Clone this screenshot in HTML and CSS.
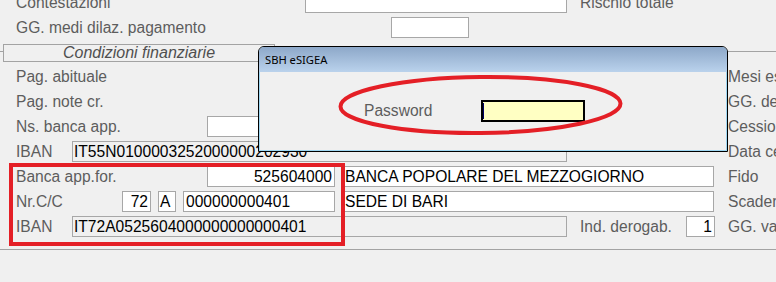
FILE: index.html
```html
<!DOCTYPE html>
<html lang="it">
<head>
<meta charset="utf-8">
<title>SBH eSIGEA</title>
<link rel="stylesheet" href="styles.css">
</head>
<body>
<div class="screen">
  <div class="form">
    <div class="row row-first">
      <span class="lbl w289">Contestazioni</span>
      <div class="fld w262"></div>
      <span class="lbl ml13">Rischio totale</span>
    </div>
    <div class="row">
      <span class="lbl w375">GG. medi dilaz. pagamento</span>
      <div class="fld w78"></div>
    </div>
    <div class="band"><div class="band-title">Condizioni finanziarie</div></div>
    <div class="row">
      <span class="lbl w712">Pag. abituale</span>
      <span class="lbl">Mesi esclusi</span>
    </div>
    <div class="row">
      <span class="lbl w712">Pag. note cr.</span>
      <span class="lbl">GG. decorrenza</span>
    </div>
    <div class="row">
      <span class="lbl w191">Ns. banca app.</span>
      <div class="fld w90"></div>
      <span class="lbl ml431">Cessione</span>
    </div>
    <div class="row">
      <span class="lbl w56">IBAN</span>
      <div class="fld dis w495">IT55N0100003252000000202930</div>
      <span class="lbl ml161">Data cessione</span>
    </div>
    <div class="row">
      <span class="lbl w191">Banca app.for.</span>
      <div class="fld num w128">525604000</div>
      <div class="fld w372 ml7">BANCA POPOLARE DEL MEZZOGIORNO</div>
      <span class="lbl ml14">Fido</span>
    </div>
    <div class="row">
      <span class="lbl w106">Nr.C/C</span>
      <div class="fld num w29">72</div>
      <div class="fld w18 ml7">A</div>
      <div class="fld w152 ml7">000000000401</div>
      <div class="fld w372 ml7">SEDE DI BARI</div>
      <span class="lbl ml14">Scadenza</span>
    </div>
    <div class="row">
      <span class="lbl w56">IBAN</span>
      <div class="fld dis w495">IT72A0525604000000000000401</div>
      <span class="lbl w106 ml13">Ind. derogab.</span>
      <div class="fld num w29">1</div>
      <span class="lbl ml13">GG. valuta</span>
    </div>
    <div class="bottom-rule"></div>
  </div>

  <div class="dialog">
    <div class="dialog-title">SBH eSIGEA</div>
    <div class="dialog-body">
      <span class="pw-label">Password</span>
      <div class="pw-field"><span class="caret"></span></div>
    </div>
  </div>

  <div class="mark-rect"></div>
  <svg class="mark-ellipse" width="776" height="282" viewBox="0 0 776 282">
    <ellipse cx="480.5" cy="105" rx="140" ry="28" fill="none" stroke="#e41f26" stroke-width="4" transform="rotate(-0.6 480.5 105)"/>
  </svg>
</div>
</body>
</html>
```

FILE: styles.css
```css
* { box-sizing: border-box; }

html, body {
  margin: 0;
  padding: 0;
  background: #f0f0f0;
  overflow: hidden;
}

.screen {
  position: relative;
  width: 776px;
  height: 282px;
  overflow: hidden;
  font-family: "Liberation Sans", Arial, sans-serif;
  font-size: 15.6px;
  color: #5d5d5d;
}

.form {
  margin-top: -8px;
  display: flex;
  flex-direction: column;
  gap: 4px;
}

.row {
  display: flex;
  align-items: center;
  height: 21px;
  padding-left: 16px;
  white-space: nowrap;
}

.lbl {
  flex: none;
  white-space: nowrap;
}

.fld {
  flex: none;
  height: 21px;
  border: 1px solid #a7a7a7;
  background: #fff;
  color: #000;
  padding: 0 2px;
  line-height: 19px;
  white-space: nowrap;
  overflow: hidden;
}
.fld.dis { background: #f0f0f0; padding-left: 1px; }
.fld.num { text-align: right; }

.w18 { width: 18px; padding: 0 1px; }
.w29 { width: 29px; }
.w56 { width: 56px; }
.w78 { width: 78px; }
.w90 { width: 90px; }
.w106 { width: 106px; }
.w128 { width: 128px; }
.w152 { width: 152px; }
.w191 { width: 191px; }
.w262 { width: 262px; }
.w289 { width: 289px; }
.w372 { width: 372px; }
.w375 { width: 375px; }
.w495 { width: 495px; }
.w712 { width: 712px; }

.ml7 { margin-left: 7px; }
.ml13 { margin-left: 13px; }
.ml14 { margin-left: 14px; }
.ml161 { margin-left: 161px; }
.ml431 { margin-left: 431px; }

.band {
  margin-top: 2px;
  height: 18px;
  display: flex;
  background: linear-gradient(to bottom, transparent 7px, #a3a3a3 7px, #a3a3a3 8px, transparent 8px);
}
.band-title {
  margin-left: 3px;
  width: 272px;
  height: 18px;
  border: 1px solid #a3a3a3;
  background: #f0f0f0;
  text-align: center;
  font-style: italic;
  font-size: 16px;
  color: #4f4f4f;
  line-height: 15px;
}

.bottom-rule {
  margin-top: 8px;
  border-top: 1px solid #a3a3a3;
}

/* dialog overlay */
.dialog {
  position: absolute;
  left: 258px;
  top: 46px;
  width: 470px;
  height: 106px;
  border: 1px solid #000;
  border-radius: 6px 6px 0 0;
  background: #f0f0f0;
  box-shadow: inset 0 0 0 1px #9fd7f2;
  overflow: hidden;
  display: flex;
  flex-direction: column;
}
.dialog-title {
  height: 25px;
  background: linear-gradient(to bottom, #8da8c9, #bad2ec);
  font-family: "Noto Sans", "Liberation Sans", sans-serif;
  font-size: 11.2px;
  color: #000;
  padding-left: 6px;
  line-height: 26px;
}
.dialog-body {
  display: flex;
  align-items: center;
  padding-top: 28px;
  padding-left: 105px;
}
.pw-label {
  width: 117px;
  color: #5d5d5d;
}
.pw-field {
  width: 104px;
  height: 22px;
  border: 2px solid #000;
  background: #ffffc3;
  display: flex;
  align-items: center;
}
.caret {
  width: 1px;
  height: 16px;
  background: #000066;
}

/* red annotations */
.mark-rect {
  position: absolute;
  left: 9px;
  top: 163px;
  width: 336px;
  height: 83px;
  border: 4px solid #e41f26;
}
.mark-ellipse {
  position: absolute;
  left: 0;
  top: 0;
  pointer-events: none;
}
```
